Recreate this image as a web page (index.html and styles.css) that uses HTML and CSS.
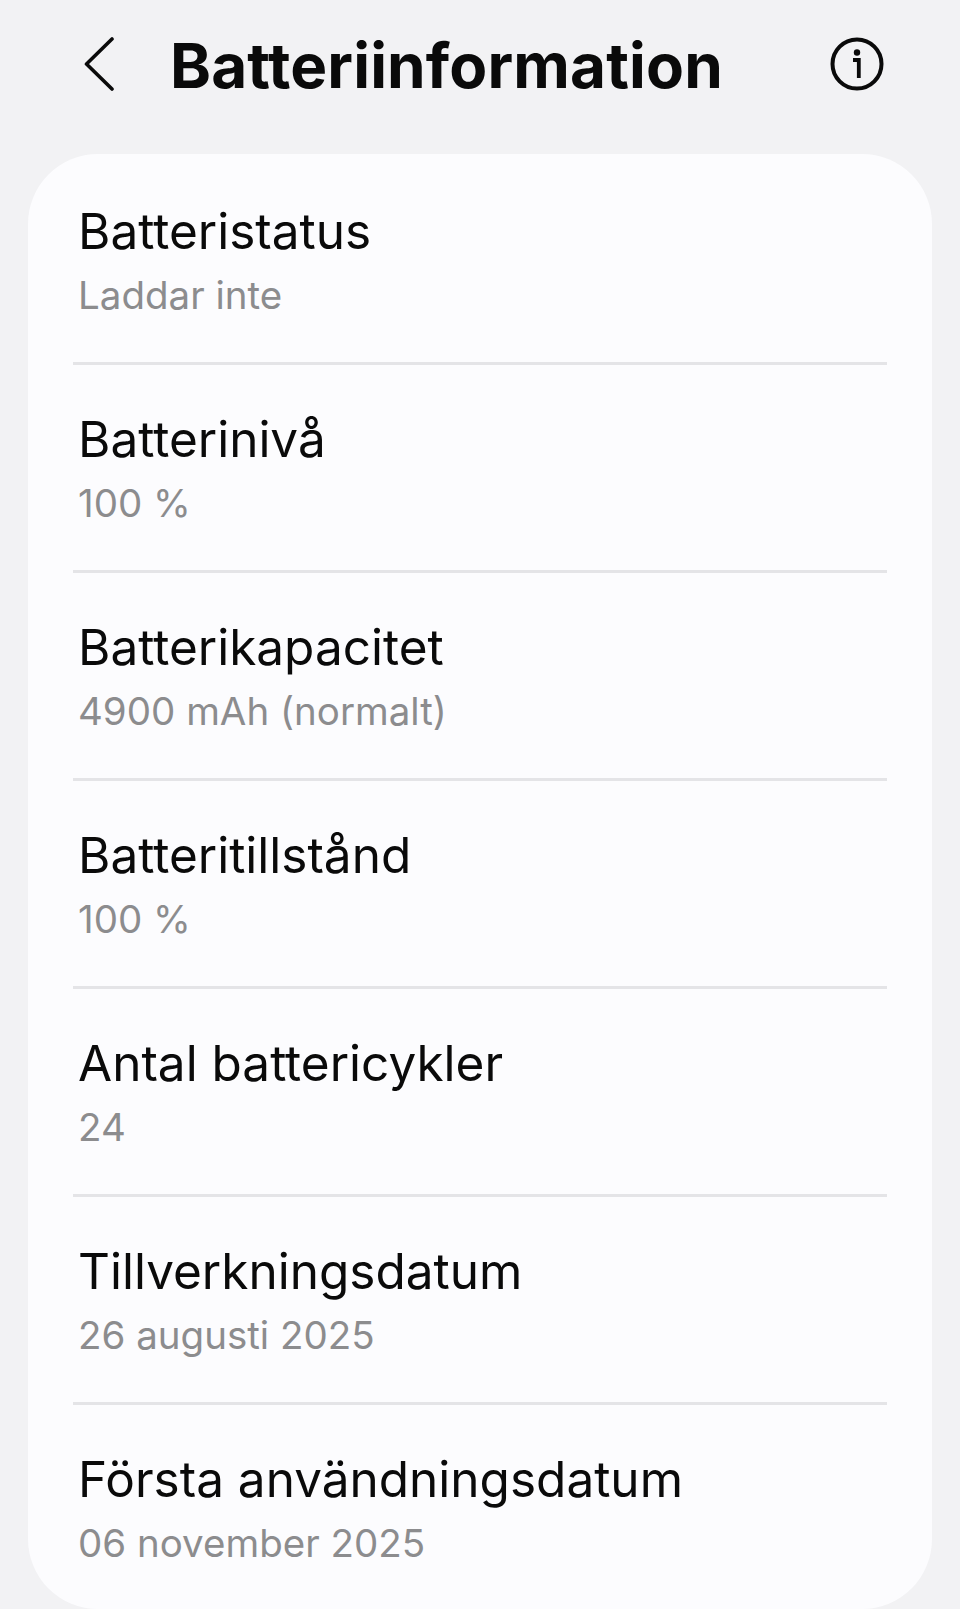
FILE: index.html
```html
<!DOCTYPE html>
<html lang="sv">
<head>
<meta charset="utf-8">
<title>Batteriinformation</title>
<link rel="stylesheet" href="styles.css">
</head>
<body>
<header class="bar">
  <svg class="back" width="30" height="54" viewBox="0 0 30 54"><path d="M28 2 L2.500 27 L28 52" fill="none" stroke="#0a0a0a" stroke-width="3.600" stroke-linecap="round" stroke-linejoin="round"/></svg>
  <h1 class="title">Batteriinformation</h1>
  <svg class="info" width="54" height="54" viewBox="0 0 54 54"><circle cx="27" cy="27" r="24.500" fill="none" stroke="#0a0a0a" stroke-width="4"/><circle cx="27" cy="15.500" r="3.200" fill="#0a0a0a"/><path d="M23 23 H28.800 V41" fill="none" stroke="#0a0a0a" stroke-width="3.800"/></svg>
</header>
<main class="card">
  <div class="row"><div class="name">Batteristatus</div><div class="val">Laddar inte</div></div>
  <div class="row"><div class="name">Batterinivå</div><div class="val">100 %</div></div>
  <div class="row"><div class="name">Batterikapacitet</div><div class="val">4900 mAh (normalt)</div></div>
  <div class="row"><div class="name">Batteritillstånd</div><div class="val">100 %</div></div>
  <div class="row"><div class="name">Antal battericykler</div><div class="val">24</div></div>
  <div class="row"><div class="name">Tillverkningsdatum</div><div class="val">26 augusti 2025</div></div>
  <div class="row"><div class="name">Första användningsdatum</div><div class="val">06 november 2025</div></div>
</main>
</body>
</html>
```
FILE: styles.css
```css
html, body { margin: 0; padding: 0; }
body { width: 960px; height: 1609px; overflow: hidden; background: #f2f2f4; font-family: "Inter", "Noto Sans", sans-serif; color: #0a0a0a; }
.bar { height: 154px; box-sizing: border-box; display: flex; align-items: flex-start; padding: 37px 76px 0 84px; }
.back { flex: none; }
.title { margin: 1px 0 0 56px; font-size: 62px; line-height: 56px; font-weight: 700; letter-spacing: 0.15px; flex: 1; white-space: nowrap; }
.info { flex: none; }
.card { margin: 0 28px; height: 1455px; box-sizing: border-box; background: #fcfcfe; border-radius: 70px; padding: 3px 45px 0 45px; overflow: hidden; }
.row { height: 208px; box-sizing: border-box; padding: 45px 0 0 5px; border-bottom: 3px solid #e4e4e7; }
.row:last-child { border-bottom: 0; }
.name { font-size: 49.500px; line-height: 58px; }
.val { font-size: 38.500px; line-height: 46px; margin-top: 12px; color: #8c8c8e; }
```
